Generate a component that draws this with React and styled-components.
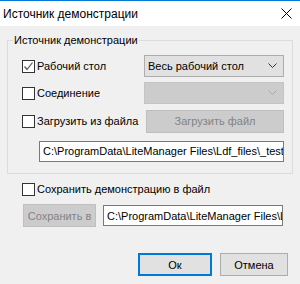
import React from "react";
import styled, { createGlobalStyle } from "styled-components";

const Global = createGlobalStyle`
  html, body {
    margin: 0;
    padding: 0;
    background: #f0f0f0;
  }
  body {
    font-family: "Liberation Sans", Arial, sans-serif;
    font-size: 11px;
    color: #000;
  }
`;

const Window = styled.div`
  width: 300px;
  height: 284px;
  background: #f0f0f0;
  display: flex;
  flex-direction: column;
  overflow: hidden;
`;

const TitleBar = styled.div`
  height: 25px;
  border-top: 1px solid #0078d7;
  background: #fff;
  display: flex;
  align-items: center;
  justify-content: space-between;
  padding: 0 8px 0 3px;
  font-size: 12px;
`;

const Body = styled.div`
  display: flex;
  flex-direction: column;
  padding: 6px 0 0 7px;
`;

const Group = styled.fieldset`
  margin: 0;
  width: 286px;
  box-sizing: border-box;
  border: 1px solid #dcdcdc;
  padding: 0 8px 11px 14px;
  display: flex;
  flex-direction: column;
`;

const Legend = styled.legend`
  margin-left: -9px;
  padding: 0 1px;
  line-height: 16px;
`;

const Row = styled.div`
  display: flex;
  align-items: center;
  justify-content: space-between;
  height: 22px;
  margin-top: ${(p) => p.$mt || 0}px;
  padding-left: ${(p) => p.$pl || 0}px;
`;

const ButtonRow = styled(Row)`
  justify-content: flex-start;
  gap: 7px;
  padding-left: 1px;
  height: 23px;
`;

const Check = styled.label`
  display: flex;
  align-items: center;
  gap: 2px;
  white-space: nowrap;
`;

const Box = styled.span`
  width: 11px;
  height: 11px;
  border: 1px solid #333;
  background: #fff;
  display: flex;
  align-items: center;
  justify-content: center;
`;

const Combo = styled.div`
  width: 140px;
  height: 22px;
  box-sizing: border-box;
  border: 1px solid ${(p) => (p.$disabled ? "#c4c4c4" : "#adadad")};
  background: ${(p) => (p.$disabled ? "#cccccc" : "#e1e1e1")};
  display: flex;
  align-items: center;
  justify-content: space-between;
  padding: 0 6px 0 3px;
`;

const Button = styled.div`
  width: ${(p) => p.$w}px;
  height: 23px;
  box-sizing: border-box;
  border: ${(p) =>
    p.$default ? "2px solid #0078d7" : p.$disabled ? "1px solid #bfbfbf" : "1px solid #adadad"};
  background: ${(p) => (p.$disabled ? "#cccccc" : "#e1e1e1")};
  color: ${(p) => (p.$disabled ? "#838383" : "#000")};
  display: flex;
  align-items: center;
  justify-content: center;
  white-space: nowrap;
`;

const TextBox = styled.div`
  width: ${(p) => p.$w}px;
  height: 21px;
  box-sizing: border-box;
  border: 1px solid #7a7a7a;
  background: #fff;
  display: flex;
  align-items: center;
  padding-left: 3px;
  overflow: hidden;
  white-space: nowrap;
`;

const Outer = styled.div`
  display: flex;
  flex-direction: column;
  padding-left: 15px;
`;

const Footer = styled.div`
  display: flex;
  gap: 8px;
  padding-left: 131px;
  margin-top: 26px;
`;

const Chevron = ({ color }) => (
  <svg width="9" height="6" viewBox="0 0 9 6">
    <polyline points="0.5,0.5 4.5,4.5 8.5,0.5" fill="none" stroke={color} strokeWidth="1" />
  </svg>
);

const CheckBox = ({ checked, children }) => (
  <Check>
    <Box>
      {checked && (
        <svg width="11" height="11" viewBox="0 0 11 11">
          <polyline points="1.5,5.5 4,8.5 9.5,1.5" fill="none" stroke="#555" strokeWidth="1.2" />
        </svg>
      )}
    </Box>
    {children}
  </Check>
);

export default function App() {
  return (
    <Window>
      <Global />
      <TitleBar>
        <span>Источник демонстрации</span>
        <svg width="11" height="11" viewBox="0 0 11 11">
          <path d="M0.5 0.5 L10.5 10.5 M10.5 0.5 L0.5 10.5" stroke="#000" strokeWidth="1" />
        </svg>
      </TitleBar>
      <Body>
        <Group>
          <Legend>Источник демонстрации</Legend>
          <Row $mt={7}>
            <CheckBox checked>Рабочий стол</CheckBox>
            <Combo>
              <span>Весь рабочий стол</span>
              <Chevron color="#333" />
            </Combo>
          </Row>
          <Row $mt={5}>
            <CheckBox>Соединение</CheckBox>
            <Combo $disabled>
              <span />
              <Chevron color="#aaa" />
            </Combo>
          </Row>
          <Row $mt={6}>
            <CheckBox>Загрузить из файла</CheckBox>
            <Button $w={138} $disabled>
              Загрузить файл
            </Button>
          </Row>
          <Row $mt={8} $pl={17}>
            <TextBox $w={245}>C:\ProgramData\LiteManager Files\Ldf_files\_test</TextBox>
          </Row>
        </Group>
        <Outer>
          <Row $mt={4}>
            <CheckBox>Сохранить демонстрацию в файл</CheckBox>
          </Row>
          <ButtonRow $mt={4}>
            <Button $w={73} $disabled>
              Сохранить в
            </Button>
            <TextBox $w={180}>C:\ProgramData\LiteManager Files\Ldf_files\_test</TextBox>
          </ButtonRow>
        </Outer>
        <Footer>
          <Button $w={74} $default>
            Ок
          </Button>
          <Button $w={68}>Отмена</Button>
        </Footer>
      </Body>
    </Window>
  );
}
